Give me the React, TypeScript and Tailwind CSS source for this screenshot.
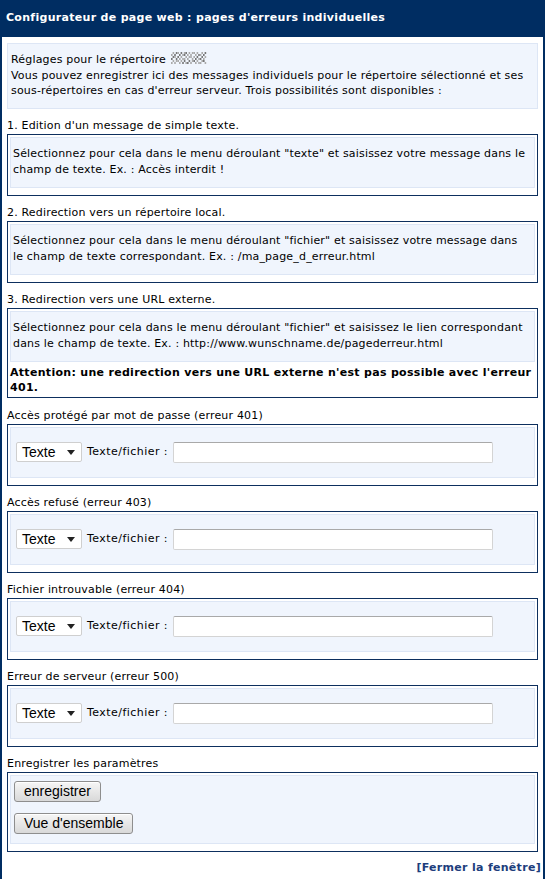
import React from "react";

const font = { fontFamily: '"DejaVu Sans", Verdana, sans-serif' };

function Blur() {
  const cells: JSX.Element[] = [];
  const pattern = [
    "0101101011010110100101",
    "1010010110101001011010",
    "0110101001011010100101",
    "1001010110100101011010",
    "0101101010010110100110",
    "1010010101101001011001",
  ];
  pattern.forEach((row, y) =>
    row.split("").forEach((c, x) => {
      if (c === "1")
        cells.push(
          <rect key={`${x}-${y}`} x={x * 1.6} y={y * 2} width={1.6} height={2} fill={(x + y) % 3 === 0 ? "#777" : "#aaa"} />
        );
    })
  );
  return (
    <svg width="36" height="12" viewBox="0 0 36 12" className="inline-block align-[-1px] ml-[1px]">
      {cells}
    </svg>
  );
}

function SelectRow() {
  return (
    <div className="flex items-center h-[21px]">
      <div className="relative w-[66px] h-[20px] bg-white border border-[#cfcfcf] rounded-[2px] flex items-center pl-[5px] text-[14px] text-black" style={{ fontFamily: '"Liberation Sans", Arial, sans-serif' }}>
        Texte
        <svg width="8" height="5" viewBox="0 0 8 5" className="absolute right-[6px] top-[7px]">
          <path d="M0 0 L8 0 L4 5 Z" fill="#222" />
        </svg>
      </div>
      <span className="ml-[5px] w-[81px] text-[11px] tracking-[0.45px] whitespace-nowrap">Texte/fichier :</span>
      <div className="ml-[5px] w-[320px] h-[21px] bg-white border border-[#d4d4d4] border-t-[#a9a9a9] rounded-[2px]" />
    </div>
  );
}

function Label({ children, cls = "mt-[9px]" }: { children: React.ReactNode; cls?: string }) {
  return <div className={`${cls} text-[11px] leading-[16px] tracking-[0.18px] text-black`}>{children}</div>;
}

function DarkBox({ children, pb = "pb-[7px]" }: { children: React.ReactNode; pb?: string }) {
  return <div className={`border border-[#0d2f5e] pt-[2px] px-[2px] ${pb}`}>{children}</div>;
}

function LightBox({ children, cls = "" }: { children: React.ReactNode; cls?: string }) {
  return <div className={`bg-[#f0f5fd] border border-[#dde6f5] ${cls}`}>{children}</div>;
}

function FormSection({ title, first = false }: { title: string; first?: boolean }) {
  return (
    <>
      <Label cls={first ? "mt-[10px]" : "mt-[9px]"}>{title}</Label>
      <DarkBox>
        <LightBox cls="px-[5px] py-[14px]">
          <SelectRow />
        </LightBox>
      </DarkBox>
    </>
  );
}

function Btn({ children }: { children: React.ReactNode }) {
  return (
    <div
      className="flex items-center h-[21px] px-[9px] border border-[#8e8e8e] rounded-[3px] bg-gradient-to-b from-[#f6f6f6] to-[#d9d9d9] text-[14px] leading-[16px] text-black shadow-[inset_0_1px_0_#fff]"
      style={{ fontFamily: '"Liberation Sans", Arial, sans-serif' }}
    >
      {children}
    </div>
  );
}

const body = "text-[11px] tracking-[0.18px]";

export default function App() {
  return (
    <div className="w-[549px] h-[879px] bg-white" style={font}>
      <div className="w-[545px] bg-white">
        <div className="h-[37px] bg-[#002d62] flex items-center pl-[6px] text-white font-bold text-[11px] tracking-[0.3px]">
          Configurateur de page web : pages d'erreurs individuelles
        </div>
        <div className="border-l-2 border-r-2 border-b-2 border-[#002d62] px-[5px] pb-[3px]">
          <div className="pt-[6px]">
            <LightBox cls={`px-[3px] pt-[8px] pb-[9px] ${body} leading-[15.5px] text-black`}>
              <div className="whitespace-nowrap">
                Réglages pour le répertoire <Blur />
              </div>
              <div className="whitespace-nowrap">
                Vous pouvez enregistrer ici des messages individuels pour le répertoire sélectionné et ses
              </div>
              <div className="whitespace-nowrap">
                sous-répertoires en cas d'erreur serveur. Trois possibilités sont disponibles :
              </div>
            </LightBox>
          </div>

          <Label>1. Edition d'un message de simple texte.</Label>
          <DarkBox>
            <LightBox cls={`px-[2px] pt-[8px] pb-[9px] ${body} leading-[16px]`}>
              <div className="whitespace-nowrap">
                Sélectionnez pour cela dans le menu déroulant "texte" et saisissez votre message dans le
              </div>
              <div className="whitespace-nowrap">champ de texte. Ex. : Accès interdit !</div>
            </LightBox>
          </DarkBox>

          <Label>2. Redirection vers un répertoire local.</Label>
          <DarkBox>
            <LightBox cls={`px-[2px] pt-[8px] pb-[9px] ${body} leading-[16px]`}>
              <div className="whitespace-nowrap">
                Sélectionnez pour cela dans le menu déroulant "fichier" et saisissez votre message dans
              </div>
              <div className="whitespace-nowrap">le champ de texte correspondant. Ex. : /ma_page_d_erreur.html</div>
            </LightBox>
          </DarkBox>

          <Label>3. Redirection vers une URL externe.</Label>
          <DarkBox pb="pb-[2px]">
            <LightBox cls={`px-[2px] pt-[8px] pb-[9px] ${body} leading-[16px]`}>
              <div className="whitespace-nowrap">
                Sélectionnez pour cela dans le menu déroulant "fichier" et saisissez le lien correspondant
              </div>
              <div className="whitespace-nowrap">dans le champ de texte. Ex. : http://www.wunschname.de/pagederreur.html</div>
            </LightBox>
            <div className="mt-[3px] text-[11px] leading-[15px] font-bold tracking-[0.3px]">
              <div className="whitespace-nowrap">
                Attention: une redirection vers une URL externe n'est pas possible avec l'erreur
              </div>
              <div>401.</div>
            </div>
          </DarkBox>

          <FormSection title="Accès protégé par mot de passe (erreur 401)" first />
          <FormSection title="Accès refusé (erreur 403)" />
          <FormSection title="Fichier introuvable (erreur 404)" />
          <FormSection title="Erreur de serveur (erreur 500)" />

          <Label>Enregistrer les paramètres</Label>
          <DarkBox>
            <LightBox cls="px-[3px] pt-[5px] pb-[9px]">
              <div className="flex flex-col items-start gap-[11px]">
                <Btn>enregistrer</Btn>
                <Btn>Vue d'ensemble</Btn>
              </div>
            </LightBox>
          </DarkBox>

          <div className="mt-[8px] text-right text-[11px] leading-[16px] font-bold tracking-[0.3px] text-[#1d3d7c] -mr-[3px]">
            [Fermer la fenêtre]
          </div>
        </div>
      </div>
    </div>
  );
}
